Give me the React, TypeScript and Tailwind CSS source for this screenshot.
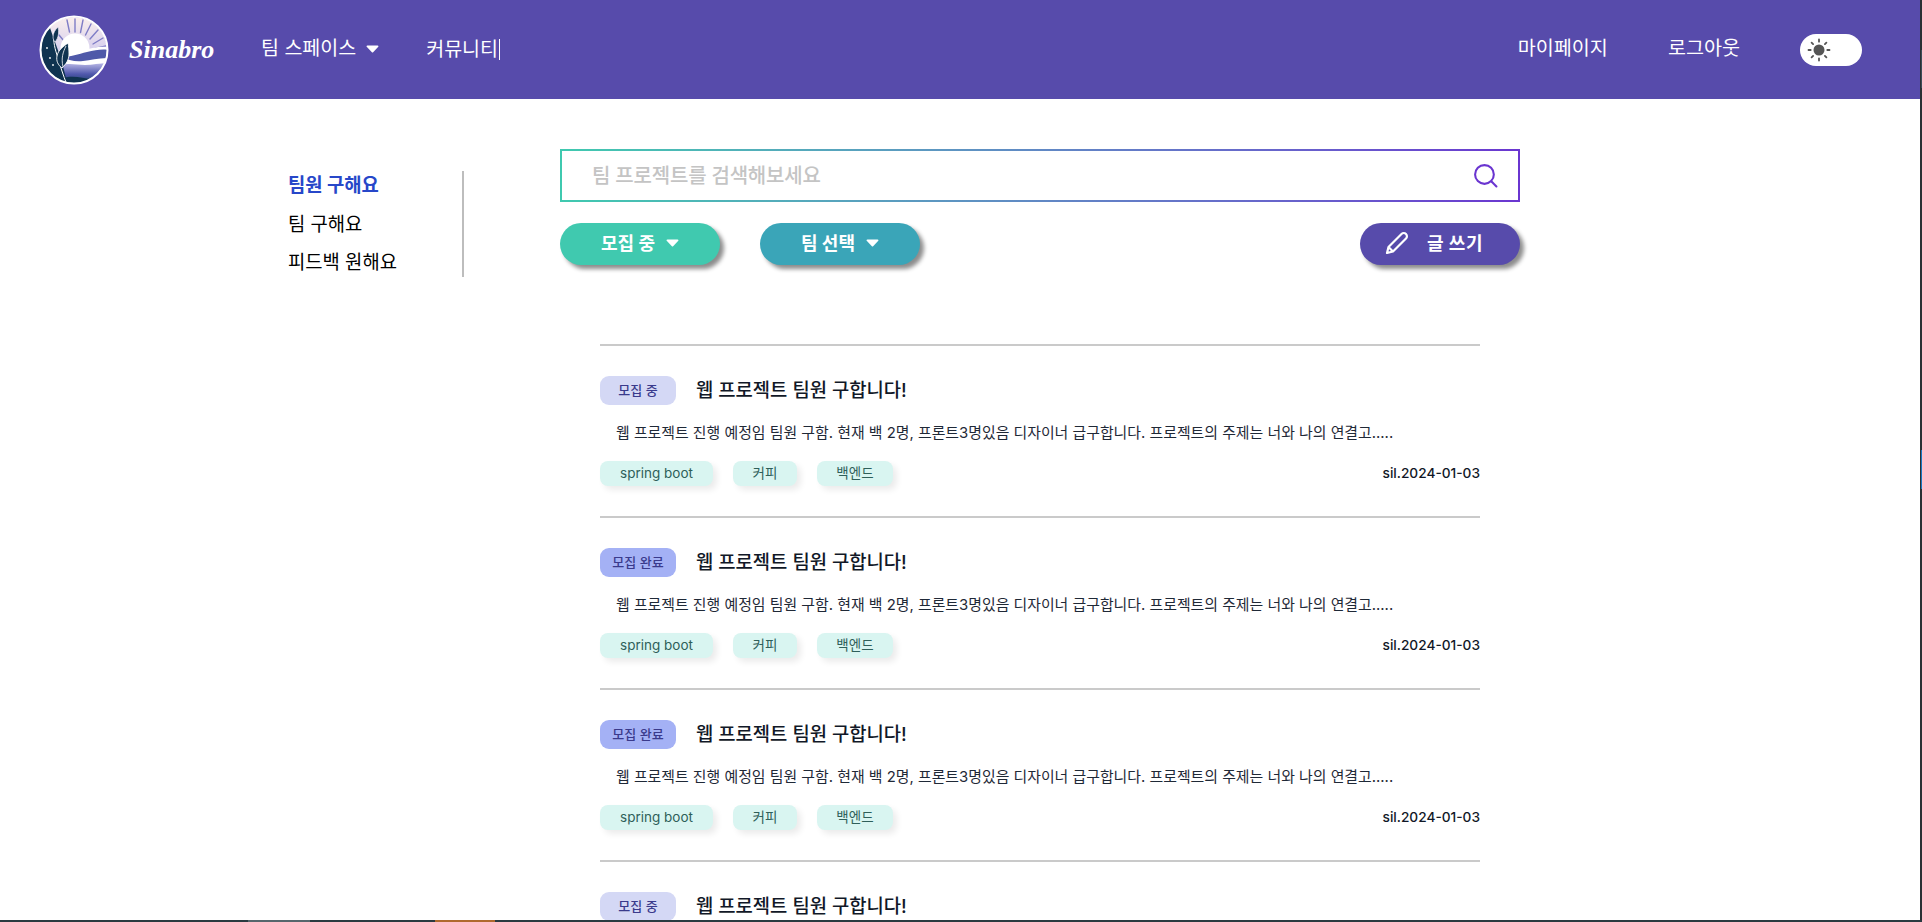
const posts = [
  { status: '모집 중', open: true },
  { status: '모집 완료', open: false },
  { status: '모집 완료', open: false },
  { status: '모집 중', open: true },
];

const Caret = ({ className }: { className?: string }) => (
  <svg viewBox="0 0 14 9" className={className} fill="currentColor">
    <path d="M1.2 0.5h11.6c.8 0 1.2.9.7 1.5L7.7 8.2c-.4.4-1 .4-1.4 0L.5 2C0 1.4.4.5 1.2.5z" />
  </svg>
);

const Logo = () => (
  <svg viewBox="0 0 70 70" className="w-[70px] h-[70px] shrink-0">
    <defs>
      <clipPath id="logo-clip">
        <circle cx="35" cy="35" r="33" />
      </clipPath>
      <linearGradient id="logo-sky" x1="0" y1="0" x2="0" y2="1">
        <stop offset="0" stopColor="#fdf1ec" />
        <stop offset="0.5" stopColor="#d6cfee" />
      </linearGradient>
      <linearGradient id="logo-sea" x1="0" y1="0" x2="0" y2="1">
        <stop offset="0" stopColor="#b9b8e6" />
        <stop offset="0.5" stopColor="#5058ad" />
        <stop offset="1" stopColor="#123a5c" />
      </linearGradient>
    </defs>
    <g clipPath="url(#logo-clip)">
      <rect width="70" height="70" fill="url(#logo-sky)" />
      <g stroke="#7f7dc6" strokeWidth="1.4" strokeLinecap="round">
        <path d="M36 4v13M44 5l-2.500 12.500M52 9l-5.500 11M59 15l-8 9M64 23l-10 6M67 31l-11 2.500M28 5l2.500 12M20 20l5 6" />
      </g>
      <circle cx="36" cy="33" r="14.500" fill="#ffffff" />
      <path d="M16 41c10-1 18-2 26-5 10-3 18-5 28-4v38H16z" fill="#ffffff" />
      <path d="M22 42c10 0 17-3 26-5 8-2 15-3 22-2v8c-10 0-18 2-26 3-8 1-15-1-22-4z" fill="#4f59a9" />
      <path d="M22 50c10-2 16 0 24 0 8 0 16-2 24-2v22H22z" fill="url(#logo-sea)" />
      <path d="M24 63c10-3 20 0 28 1 6 0 12-1 18-3v9H24z" fill="#0f3350" />
      <path d="M0 0h8c1 8 4 16 7 24 2 6 4 11 6 17 3 9 5 19 8 29H0z" fill="#0f3350" />
      <path d="M15 16c-1 8 0 15 3 24 3 10 6 20 10 30" stroke="#ffffff" strokeWidth="1" fill="none" />
      <path d="M19 12c-3 3-5 6-5 10 0 2 1 4 2 5 2-2 3-5 3.500-8 .300-2.500 0-5-.500-7z" fill="#0f3350" stroke="#e8e4f6" strokeWidth="0.7" />
      <path d="M29 28c-4 3-10 7-11 13-1 5 1 9 5 12 4-4 7-8 7-14 0-4-.300-8-1-11z" fill="#0f3350" stroke="#ffffff" strokeWidth="0.9" />
      <path d="M27 31c-3 6-5 12-3 21" stroke="#ffffff" strokeWidth="0.8" fill="none" />
      <circle cx="8" cy="33" r="0.900" fill="#ffffff" />
      <circle cx="11" cy="43" r="0.900" fill="#ffffff" />
      <circle cx="14" cy="50" r="0.900" fill="#ffffff" />
    </g>
    <circle cx="35" cy="35" r="33.500" fill="none" stroke="#ffffff" strokeWidth="2" />
  </svg>
);

const Sun = () => (
  <svg viewBox="0 0 24 24" className="w-[24px] h-[24px]" fill="#555555" stroke="#555555">
    <circle cx="12" cy="12" r="5.500" stroke="none" />
    <g strokeWidth="1.800" strokeLinecap="round">
      <path d="M12 1.500v2.200M12 20.300v2.200M1.500 12h2.200M20.300 12h2.200M4.600 4.600l1.500 1.500M17.900 17.900l1.500 1.500M4.600 19.400l1.500-1.500M17.900 6.100l1.500-1.500" />
    </g>
  </svg>
);

const Header = () => (
  <header className="h-[99px] bg-[#574bab] flex items-center pl-[39px] pr-[58px] text-white">
    <Logo />
    <span className="ml-[20px] w-[83px] text-[26px] font-bold italic leading-none font-['Liberation_Serif',serif]">
      Sinabro
    </span>
    <nav className="ml-[49px] flex items-center text-[19.500px] pb-[1px]">
      <a className="flex items-center">
        팀 스페이스
        <Caret className="ml-[10px] w-[13px] h-[8px]" />
      </a>
      <a className="ml-[47px] border-r border-white pr-[1px] leading-[21px]">커뮤니티</a>
    </nav>
    <div className="ml-auto flex items-center text-[19.600px]">
      <a className="pb-[1px]">마이페이지</a>
      <a className="ml-[60px] pb-[1px]">로그아웃</a>
      <div className="ml-[60px] w-[62px] h-[32px] rounded-full bg-white flex items-center pl-[7px]">
        <Sun />
      </div>
    </div>
  </header>
);

const Sidebar = () => (
  <aside className="w-[176px] h-[106px] mt-[22px] pt-[1px] border-r-2 border-[#bdbdbd] flex flex-col gap-[11.500px] text-[18.800px] leading-[27px] text-black shrink-0">
    <a className="font-bold text-[#2747c9]">팀원 구해요</a>
    <a>팀 구해요</a>
    <a>피드백 원해요</a>
  </aside>
);

const FilterButton = ({ label, color }: { label: string; color: string }) => (
  <button className={`w-[160px] h-[42px] pb-[2px] rounded-full ${color} text-white text-[18px] font-bold flex items-center justify-center gap-[11px] shadow-[4px_4px_4px_rgba(0,0,0,0.45)]`}>
    {label}
    <Caret className="w-[13px] h-[8px]" />
  </button>
);

const SearchBar = () => (
  <div className="h-[53px] bg-gradient-to-r from-[#3fc9af] to-[#6a35d0] p-[2px]">
    <div className="h-full bg-white flex items-center justify-between pl-[30px] pr-[20px]">
      <span className="text-[20px] font-medium tracking-[-0.2px] text-[#c4c4c4]">팀 프로젝트를 검색해보세요</span>
      <svg viewBox="0 0 24 24" className="w-[25px] h-[25px]" fill="none" stroke="#6a35d0" strokeWidth="2" strokeLinecap="round">
        <circle cx="11" cy="11" r="9" />
        <path d="M18 18l4.500 4.500" />
      </svg>
    </div>
  </div>
);

const Post = ({ status, open }: { status: string; open: boolean }) => (
  <article className="border-t-2 border-[#cacaca] h-[172px] pt-[30px]">
    <div className="flex items-center h-[29px]">
      <span
        className={`w-[76px] h-[29px] rounded-[9px] flex items-center justify-center text-[13px] font-medium text-[#3a3a8c] ${
          open ? 'bg-[#d4d8f5]' : 'bg-[#a4b1f5]'
        }`}
      >
        {status}
      </span>
      <h3 className="ml-[20px] pt-[1px] text-[18.800px] font-medium text-[#111827]">웹 프로젝트 팀원 구합니다!</h3>
    </div>
    <p className="mt-[14px] ml-[16px] text-[14.900px] leading-[28px] text-[#1f2937]">
      웹 프로젝트 진행 예정임 팀원 구함. 현재 백 2명, 프론트3명있음 디자이너 급구합니다. 프로젝트의 주제는 너와 나의 연결고.....
    </p>
    <div className="mt-[14px] flex items-center">
      <div className="flex gap-[20px] text-[13.500px] text-[#2f5f5a]">
        <span className="w-[113px] h-[25px] rounded-[8px] bg-[#d9f5f1] flex items-center justify-center shadow-[4px_4px_6px_rgba(0,0,0,0.08)]">spring boot</span>
        <span className="w-[64px] h-[25px] rounded-[8px] bg-[#d9f5f1] flex items-center justify-center shadow-[4px_4px_6px_rgba(0,0,0,0.08)]">커피</span>
        <span className="w-[76px] h-[25px] rounded-[8px] bg-[#d9f5f1] flex items-center justify-center shadow-[4px_4px_6px_rgba(0,0,0,0.08)]">백엔드</span>
      </div>
      <span className="ml-auto pb-[1px] text-[13.700px] font-medium text-[#111827]">sil.2024-01-03</span>
    </div>
  </article>
);

export default function App() {
  return (
    <div className="h-[922px] w-full flex flex-col overflow-hidden bg-white font-['Inter','Noto_Sans_CJK_KR',sans-serif]">
      <div className="flex-1 min-h-0 flex">
        <div className="flex-1 min-w-0">
          <Header />
          <main className="flex pl-[288px] pt-[50px]">
            <Sidebar />
            <div className="ml-[96px] w-[960px]">
              <SearchBar />
              <div className="mt-[21px] flex items-center">
                <FilterButton label="모집 중" color="bg-[#40c9af]" />
                <div className="ml-[40px]">
                  <FilterButton label="팀 선택" color="bg-[#3aa5b8]" />
                </div>
                <button className="ml-auto w-[160px] h-[42px] rounded-full bg-[#574bab] text-white text-[18px] font-bold tracking-[0.5px] flex items-center pl-[25px] pb-[2px] gap-[18px] shadow-[4px_4px_4px_rgba(0,0,0,0.45)]">
                  <svg viewBox="0 0 24 24" className="w-[24px] h-[24px]" fill="none" stroke="#ffffff" strokeWidth="2.200" strokeLinejoin="round">
                    <path d="M2 22l1.500-6L16.500 3a2.600 2.600 0 0 1 4.500 4.500L8 20.500z" />
                    <path d="M3.500 16L8 20.500" />
                  </svg>
                  글 쓰기
                </button>
              </div>
              <div className="mt-[79px] mx-[40px]">
                {posts.map((post, i) => (
                  <Post key={i} status={post.status} open={post.open} />
                ))}
              </div>
            </div>
          </main>
        </div>
        <div className="w-[2px] bg-[#2a3034] flex flex-col items-end">
          <div className="mt-[50px] h-[38px] w-[1px] bg-[#3d4c58]" />
          <div className="mt-[362px] h-[39px] w-[1px] bg-[#1a78c2]" />
        </div>
      </div>
      <div className="h-[2px] flex bg-[#2a3a40]">
        <div className="ml-[248px] w-[62px] bg-[#56666c]" />
        <div className="ml-[125px] w-[60px] bg-[#b0692e]" />
      </div>
    </div>
  );
}
